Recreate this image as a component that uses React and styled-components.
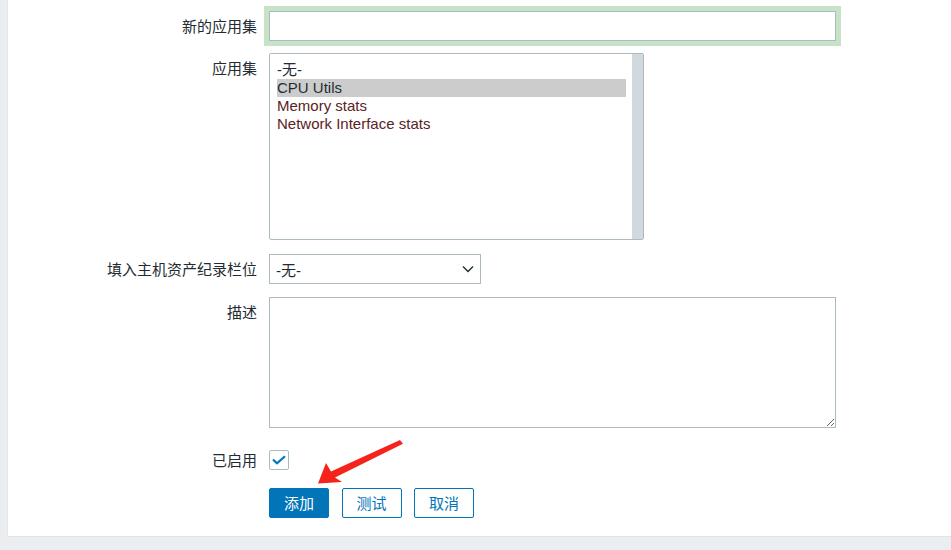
import React from "react";
import styled, { createGlobalStyle } from "styled-components";

const GlobalStyle = createGlobalStyle`
  * { box-sizing: border-box; }
  html, body { margin: 0; padding: 0; background: #ebeef0; }
  body {
    font-family: "Liberation Sans", Arial, "Noto Sans CJK SC", sans-serif;
    font-size: 15px;
    color: #1f2c33;
  }
`;

const Page = styled.div`
  position: relative;
  width: 951px;
  height: 550px;
  padding-left: 7px;
  overflow: hidden;
`;

const Panel = styled.div`
  background: #fff;
  height: 537px;
  border-bottom: 1px solid #dfe4e7;
  border-left: 1px solid #e4e8eb;
  padding-top: 11px;
  display: flex;
  flex-direction: column;
`;

const FormRow = styled.div`
  display: grid;
  grid-template-columns: 249px 1fr;
  column-gap: 12px;
  margin-top: ${(p) => p.$mt || 0}px;
  align-items: ${(p) => (p.$center ? "center" : "start")};
`;

const Label = styled.div`
  text-align: right;
  line-height: 29px;
  height: 30px;
  font-family: "Noto Sans CJK SC", "Liberation Sans", sans-serif;
  font-size: 15px;
  color: #1f2c33;
`;

const TextInput = styled.input`
  width: 567px;
  height: 30px;
  border: 1px solid #acbbc2;
  border-radius: 0;
  background: #fff;
  box-shadow: 0 0 0 5px #c6e3c6;
  font: inherit;
  padding: 0 6px;
  outline: none;
  display: block;
`;

const ListBox = styled.div`
  width: 375px;
  height: 187px;
  border: 1px solid #acbbc2;
  border-radius: 2px;
  display: flex;
  background: #fff;
`;

const Options = styled.div`
  flex: 1;
  padding: 7px 6px 0 7px;
`;

const Option = styled.div`
  height: 18px;
  line-height: 18px;
  white-space: nowrap;
  font-family: "Liberation Sans", Arial, "Noto Sans CJK SC", sans-serif;
  color: ${(p) => (p.$muted ? "#5a2323" : "#1f2c33")};
  background: ${(p) => (p.$selected ? "#cccccc" : "transparent")};
`;

const ScrollTrack = styled.div`
  width: 11px;
  background: #d1d9df;
`;

const SelectBox = styled.div`
  width: 212px;
  height: 30px;
  border: 1px solid #acbbc2;
  background: #fff;
  display: flex;
  align-items: center;
  justify-content: space-between;
  padding: 0 6px 0 6px;
  font-family: "Liberation Sans", Arial, "Noto Sans CJK SC", sans-serif;
`;

const TextArea = styled.textarea`
  width: 567px;
  height: 131px;
  border: 1px solid #acbbc2;
  border-radius: 0;
  font: inherit;
  padding: 4px 6px;
  outline: none;
  display: block;
  resize: both;
`;

const CheckBox = styled.div`
  width: 20px;
  height: 20px;
  border: 1px solid #acbbc2;
  border-radius: 2px;
  background: #fff;
  display: flex;
  align-items: center;
  justify-content: center;
`;

const Buttons = styled.div`
  display: flex;
  gap: 12.5px;
`;

const Button = styled.button`
  height: 30px;
  width: 60px;
  padding: 0;
  border-radius: 2px;
  border: 1px solid #0275b8;
  background: ${(p) => (p.$primary ? "#0275b8" : "#fff")};
  color: ${(p) => (p.$primary ? "#fff" : "#0275b8")};
  font-family: "Noto Sans CJK SC", "Liberation Sans", sans-serif;
  font-size: 15px;
  line-height: 28px;
  cursor: pointer;
`;

const ArrowLayer = styled.svg`
  position: absolute;
  left: 0;
  top: 0;
  pointer-events: none;
`;

export default function App() {
  return (
    <>
      <GlobalStyle />
      <Page>
        <Panel>
          <FormRow>
            <Label>新的应用集</Label>
            <div>
              <TextInput type="text" />
            </div>
          </FormRow>

          <FormRow $mt={12}>
            <Label>应用集</Label>
            <ListBox>
              <Options>
                <Option>-无-</Option>
                <Option $selected>CPU Utils</Option>
                <Option $muted>Memory stats</Option>
                <Option $muted>Network Interface stats</Option>
              </Options>
              <ScrollTrack />
            </ListBox>
          </FormRow>

          <FormRow $mt={14}>
            <Label>填入主机资产纪录栏位</Label>
            <SelectBox>
              <span>-无-</span>
              <svg width="12" height="8" viewBox="0 0 12 8">
                <path d="M1 1.5 L6 6.5 L11 1.5" fill="none" stroke="#1f2c33" strokeWidth="1.4" />
              </svg>
            </SelectBox>
          </FormRow>

          <FormRow $mt={13}>
            <Label>描述</Label>
            <div>
              <TextArea />
            </div>
          </FormRow>

          <FormRow $mt={17} $center>
            <Label>已启用</Label>
            <CheckBox>
              <svg width="14" height="10" viewBox="0 0 14 10">
                <path d="M1 4.5 L5 8.3 L13 1.2" fill="none" stroke="#0275b8" strokeWidth="2.2" />
              </svg>
            </CheckBox>
          </FormRow>

          <FormRow $mt={13}>
            <div />
            <Buttons>
              <Button $primary>添加</Button>
              <Button>测试</Button>
              <Button>取消</Button>
            </Buttons>
          </FormRow>
        </Panel>

        <ArrowLayer width="951" height="550" viewBox="0 0 951 550">
          <polygon
            points="318,483.5 326,463 331,471.5 400,440 403,443.8 335,477.5 342,482"
            fill="#f5231b"
          />
        </ArrowLayer>
      </Page>
    </>
  );
}
